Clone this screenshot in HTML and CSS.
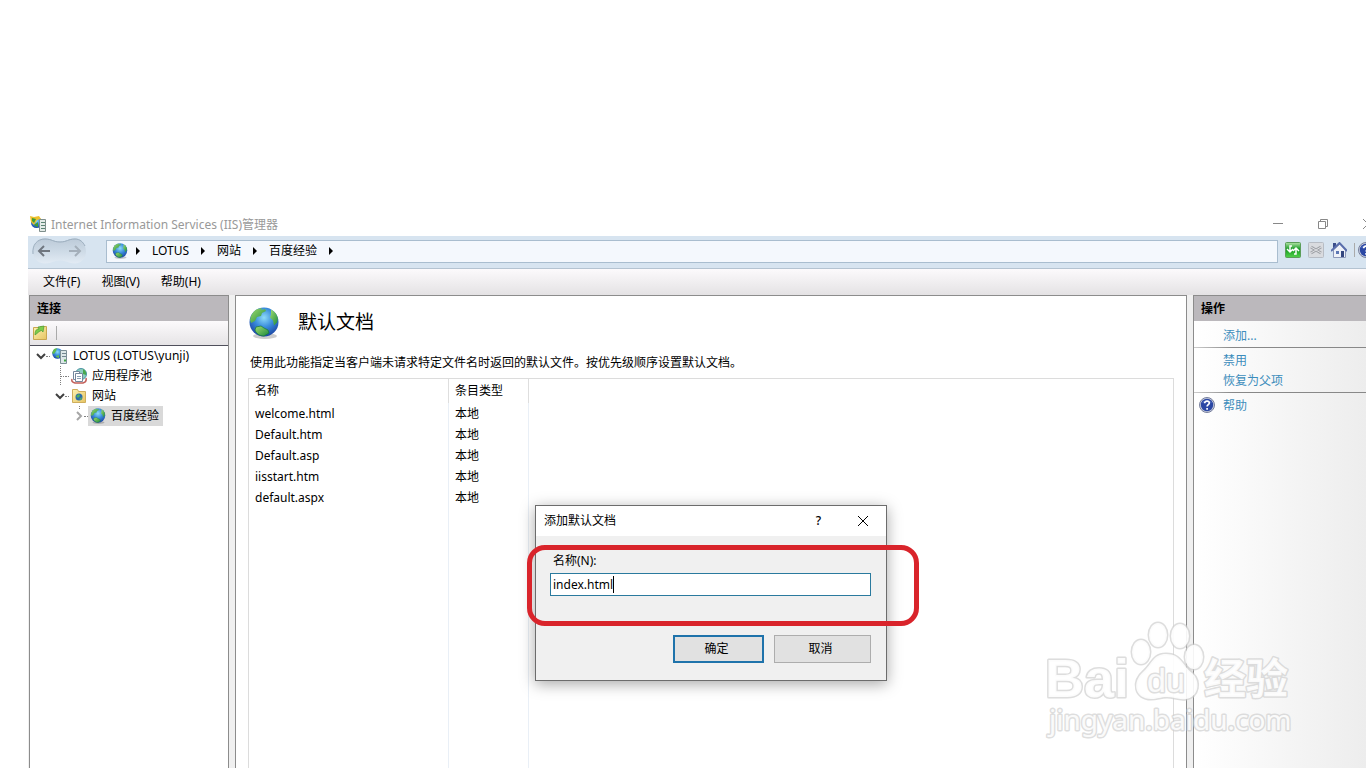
FILE: index.html
```html
<!DOCTYPE html>
<html lang="zh-CN">
<head>
    <meta charset="UTF-8">
    <meta name="viewport" content="width=device-width, initial-scale=1.0">
    <title>Internet Information Services (IIS)管理器</title>
    <link rel="stylesheet" href="styles.css">
</head>
<body>
    <!-- shared icons -->
    <svg class="defs" aria-hidden="true">
        <defs>
            <radialGradient id="sea" cx="50%" cy="35%" r="65%">
                <stop offset="0" stop-color="#8edcf8"/>
                <stop offset="0.5" stop-color="#3a8cdc"/>
                <stop offset="1" stop-color="#1b45a4"/>
            </radialGradient>
            <linearGradient id="land" x1="0" y1="0" x2="1" y2="1">
                <stop offset="0" stop-color="#a0dc70"/>
                <stop offset="1" stop-color="#1c8a3c"/>
            </linearGradient>
            <linearGradient id="green" x1="0" y1="0" x2="0" y2="1">
                <stop offset="0" stop-color="#b4e4a8"/>
                <stop offset="0.45" stop-color="#149a22"/>
                <stop offset="1" stop-color="#52d24a"/>
            </linearGradient>
            <linearGradient id="paper" x1="0" y1="0" x2="1" y2="1">
                <stop offset="0" stop-color="#fdf3b2"/>
                <stop offset="1" stop-color="#e6c463"/>
            </linearGradient>
            <linearGradient id="groove" x1="0" y1="0" x2="0" y2="1">
                <stop offset="0" stop-color="#bccad8"/>
                <stop offset="0.5" stop-color="#cddae6"/>
                <stop offset="1" stop-color="#e2ebf4"/>
            </linearGradient>
        </defs>
        <symbol id="globe" viewBox="0 0 32 32">
            <ellipse cx="17" cy="29" rx="12" ry="3" fill="#000" opacity="0.2"/>
            <circle cx="16" cy="15" r="14.500" fill="url(#sea)"/>
            <path d="M3 9C5 4 9 1.500 14 1l-1 2 4-1 1 2-4 2-1 3-4 1-2 4-4 2-1-3z" fill="url(#land)"/>
            <path d="M23 2.500c4 2 6 5 7 9l-1 4-3 3-1-5-3-3 1-3z" fill="url(#land)"/>
            <path d="M8 20l5-1 3 2 4 2 1 3-5 3c-5 0-8-3-9-6z" fill="url(#land)" stroke="#177a3a" stroke-width=".7"/>
        </symbol>
        <symbol id="server" viewBox="0 0 16 16">
            <circle cx="5.500" cy="5.500" r="5.200" fill="url(#sea)"/>
            <path d="M0 5l2-4 3-1-1 3-2 3zM4 8l3-1v3l-3-1z" fill="#62bd4c"/>
            <path d="M8.500 2.500h6v13h-6z" fill="#dce7e8" stroke="#7b8f96"/>
            <path d="M10 5.500h4M10 8.500h4" stroke="#71868f"/>
            <path d="M12 12.500h2" stroke="#3da53f" stroke-width="2"/>
        </symbol>
        <symbol id="help" viewBox="0 0 16 16">
            <circle cx="8" cy="8" r="7.500" fill="#c9cede" stroke="#777f9c"/>
            <circle cx="8" cy="8" r="6.200" fill="#2a47a4"/>
            <path d="M3 6a5.500 4.500 0 0 1 10 0q-5-2-10 0z" fill="#7e98dc" opacity="0.7"/>
            <path d="M5.700 6.200c0-3 4.800-2.700 4.600-.1-.1 1.500-2.200 1.700-2.200 3.400M8.100 11v1.700" fill="none" stroke="#fff" stroke-width="1.700"/>
        </symbol>
        <symbol id="chevron" viewBox="0 0 10 20">
            <path d="M1 8l4 4 4-4" fill="none" stroke="#404040" stroke-width="2"/>
        </symbol>
        <symbol id="arrow" viewBox="0 0 4 8">
            <path d="M0 0l4 4-4 4z" fill="#000"/>
        </symbol>
    </svg>

    <div class="window">
        <header class="titlebar">
            <svg class="icon" viewBox="0 0 16 16">
                <circle cx="6.500" cy="6.500" r="5.500" fill="url(#sea)"/>
                <path d="M0 0l4 1 5-1 2 3-4 1-3 5-3-3z" fill="#edc02c"/>
                <path d="M2 2l4 1-2 4-2-2zM4 9l4-3v5l-3-1z" fill="#3f9b39"/>
                <path d="M9.500 3.500h6v12h-6z" fill="#e4ebe8" stroke="#7f8f8c"/>
                <path d="M11 6.500h4M11 9.500h4M11 12.500h4" stroke="#5c8474"/>
            </svg>
            <h1 class="window-title">Internet Information Services (IIS)管理器</h1>
            <div class="window-buttons">
                <button aria-label="最小化"><svg viewBox="0 0 10 10"><path d="M0 4.500h10"/></svg></button>
                <button aria-label="还原"><svg viewBox="0 0 10 10"><path d="M.5 2.500h7v7h-7zM2.500 2.500v-2h7v7h-2"/></svg></button>
                <button aria-label="关闭"><svg viewBox="0 0 10 10"><path d="M0 0l10 10M10 0L0 10"/></svg></button>
            </div>
        </header>

        <nav class="navbar">
            <div class="history">
                <svg class="history-shape" viewBox="0 0 55 26">
                    <path d="M13 .5c7 0 8 3 15 3s8-3 15-3c6 0 11 6 11 13s-5 12-11 12c-7 0-8-3-15-3s-8 3-15 3c-7 0-12-5-12-12S6 .5 13 .5z" fill="url(#groove)"/>
                    <path d="M1 16C0 7 5 1 13 1c7 0 8 3 15 3s8-3 15-3c5 0 8 3 10 7" fill="none" stroke="#9caebe"/>
                </svg>
                <button aria-label="后退"><svg viewBox="0 0 14 12"><path d="M13 6H2M7 1L2 6l5 5" fill="none" stroke="#707780" stroke-width="2"/></svg></button>
                <button aria-label="前进"><svg viewBox="0 0 14 12"><path d="M1 6h11M7 1l5 5-5 5" fill="none" stroke="#a4afba" stroke-width="2"/></svg></button>
            </div>
            <div class="address">
                <svg class="icon"><use href="#globe"/></svg>
                <svg class="arrow"><use href="#arrow"/></svg>
                <a href="#">LOTUS</a>
                <svg class="arrow"><use href="#arrow"/></svg>
                <a href="#">网站</a>
                <svg class="arrow"><use href="#arrow"/></svg>
                <a href="#">百度经验</a>
                <svg class="arrow"><use href="#arrow"/></svg>
            </div>
            <div class="tools">
                <button aria-label="刷新">
                    <svg class="icon" viewBox="0 0 16 16">
                        <rect x=".5" y=".5" width="15" height="15" rx="1" fill="url(#green)" stroke="#5b9d59"/>
                        <path d="M7 4H5v5M2 7l3 3 3-3M9 12h2V7M8 9l3-3 3 3" fill="none" stroke="#fff" stroke-width="1.500"/>
                    </svg>
                </button>
                <button aria-label="停止" disabled>
                    <svg class="icon" viewBox="0 0 16 16">
                        <rect x=".5" y=".5" width="15" height="15" rx="1" fill="#d9dbdf" stroke="#b7bcc4"/>
                        <path d="M3 5l10 6M13 5L3 11" stroke="#a0a3a8" stroke-width="3"/>
                        <path d="M3 5l10 6M13 5L3 11" stroke="#dfe0e3"/>
                    </svg>
                </button>
                <button aria-label="主页">
                    <svg class="icon" viewBox="0 0 16 16">
                        <path d="M2.500 8L9 2l5.500 6v7.500h-12z" fill="#eef1f8" stroke="#8c98b8"/>
                        <path d="M2 1h3v5H2z" fill="#3a4d8a"/>
                        <path d="M0 9l8.500-8L16 9" fill="none" stroke="#5a6eac" stroke-width="2"/>
                        <path d="M5 9h3v3H5z" fill="#5c77b4"/>
                        <path d="M10 9h3v6h-3z" fill="#34477f"/>
                    </svg>
                </button>
                <span class="tool-divider"></span>
                <button aria-label="帮助"><svg class="icon"><use href="#help"/></svg></button>
            </div>
        </nav>

        <div class="menubar">
            <button>文件(F)</button>
            <button>视图(V)</button>
            <button>帮助(H)</button>
        </div>

        <div class="workspace">
            <aside class="panel">
                <h2 class="panel-title">连接</h2>
                <div class="panel-tools">
                    <button aria-label="连接">
                        <svg class="icon" viewBox="0 0 16 16">
                            <path d="M1.500 2.500h6l1-1h6v13h-13z" fill="url(#paper)" stroke="#c9a650"/>
                            <path d="M3 10c0-4 1-6 4-6l-1-2 6-1-1 6-1.500-1.500C7 6 6 8 3 10z" fill="#7ccc4a" stroke="#4a9a36" stroke-width=".7"/>
                        </svg>
                    </button>
                    <span class="tool-divider"></span>
                </div>
                <ul class="tree">
                    <li>
                        <div class="node">
                            <svg class="chevron"><use href="#chevron"/></svg><span class="dots"></span>
                            <span class="label"><svg class="icon"><use href="#server"/></svg>LOTUS (LOTUS\yunji)</span>
                        </div>
                        <ul>
                            <li>
                                <div class="node">
                                    <svg class="chevron" viewBox="0 0 10 20"><path d="M5.500 0v20M6 10.500h4" fill="none" stroke="#808080" stroke-dasharray="1 1"/></svg><span class="dots"></span>
                                    <span class="label">
                                        <svg class="icon" viewBox="0 0 16 16">
                                            <circle cx="10" cy="6" r="5.500" fill="#8cccc0" stroke="#4b94a4"/>
                                            <path d="M12 1q4 2 3 6l-3-1z" fill="#4aa84c"/>
                                            <path d="M1 11q-1 3 3 4h8q4-1 3-5" fill="none" stroke="#c3605a" stroke-width="1.500"/>
                                            <path d="M2.500 3.500h6v8h-6z" fill="#fff" stroke="#75879c"/>
                                            <path d="M4.500 5.500h7v8h-7z" fill="#fff" stroke="#75879c"/>
                                            <path d="M6 8.500h4M6 10.500h4" stroke="#8ca0b4"/>
                                        </svg>应用程序池</span>
                                </div>
                            </li>
                            <li>
                                <div class="node">
                                    <svg class="chevron"><use href="#chevron"/></svg><span class="dots"></span>
                                    <span class="label">
                                        <svg class="icon" viewBox="0 0 16 16">
                                            <path d="M1.500 1.500h5l1 2h7v11h-13z" fill="url(#paper)" stroke="#cfae5c"/>
                                            <circle cx="8" cy="9" r="3.500" fill="#2c6cac"/>
                                            <path d="M5 8l3-2 1 2-2 2zM8 11l3-2-1 3z" fill="#55b556"/>
                                        </svg>网站</span>
                                </div>
                                <ul>
                                    <li>
                                        <div class="node">
                                            <svg class="chevron" viewBox="0 0 10 20"><path d="M5.500 0v4" fill="none" stroke="#808080" stroke-dasharray="1 1"/><path d="M3 6l4 4-4 4" fill="none" stroke="#a6a6a6" stroke-width="2"/></svg><span class="dots"></span>
                                            <span class="label selected"><svg class="icon"><use href="#globe"/></svg>百度经验</span>
                                        </div>
                                    </li>
                                </ul>
                            </li>
                        </ul>
                    </li>
                </ul>
            </aside>

            <main class="content">
                <div class="heading">
                    <svg class="heading-icon"><use href="#globe"/></svg>
                    <h2>默认文档</h2>
                </div>
                <p class="description">使用此功能指定当客户端未请求特定文件名时返回的默认文件。按优先级顺序设置默认文档。</p>
                <div class="list">
                    <table>
                        <thead>
                            <tr><th class="col-name">名称</th><th class="col-type">条目类型</th><td></td></tr>
                        </thead>
                        <tbody>
                            <tr><td>welcome.html</td><td>本地</td><td></td></tr>
                            <tr><td>Default.htm</td><td>本地</td><td></td></tr>
                            <tr><td>Default.asp</td><td>本地</td><td></td></tr>
                            <tr><td>iisstart.htm</td><td>本地</td><td></td></tr>
                            <tr><td>default.aspx</td><td>本地</td><td></td></tr>
                        </tbody>
                    </table>
                </div>
            </main>

            <aside class="panel actions">
                <h2 class="panel-title">操作</h2>
                <div class="action-list">
                    <a href="#">添加...</a>
                    <hr>
                    <a href="#">禁用</a>
                    <a href="#">恢复为父项</a>
                    <hr>
                    <div class="action-help">
                        <svg class="icon"><use href="#help"/></svg>
                        <a href="#">帮助</a>
                    </div>
                </div>
            </aside>
        </div>
    </div>

    <form class="dialog" role="dialog" aria-labelledby="dialog-title">
        <div class="dialog-bar">
            <h2 id="dialog-title">添加默认文档</h2>
            <button type="button" class="dialog-help">?</button>
            <button type="button" aria-label="关闭"><svg viewBox="0 0 12 12"><path d="M1 1l10 10M11 1L1 11" stroke="#000"/></svg></button>
        </div>
        <div class="dialog-body">
            <label for="doc-name">名称(N):</label>
            <div class="field">
                <input id="doc-name" type="text" value="index.html">
                <span class="caret"></span>
            </div>
            <div class="dialog-buttons">
                <button type="submit" class="ok">确定</button>
                <button type="button" class="cancel">取消</button>
            </div>
        </div>
    </form>
    <div class="highlight"></div>

    <svg class="watermark" viewBox="0 0 260 130">
        <g class="mark">
            <ellipse cx="96" cy="42" rx="9" ry="12"/>
            <ellipse cx="113" cy="25" rx="9" ry="12"/>
            <ellipse cx="135" cy="26" rx="9" ry="12"/>
            <ellipse cx="149" cy="47" rx="9" ry="12"/>
            <path d="M121 44c-13 0-14 10-22 17-13 11-9 28 7 28 7 0 9-2 16-2s11 3 19 2c13-2 15-18 6-26-10-8-11-19-26-19z"/>
            <text class="bai" x="0" y="87">Bai</text>
            <text class="du" x="102" y="82">du</text>
            <text class="exp" x="159" y="84">经验</text>
            <text class="site" x="4" y="120">jingyan.baidu.com</text>
        </g>
    </svg>
</body>
</html>
```
FILE: styles.css
```css
* {
    box-sizing: border-box;
}
body {
    position: relative;
    margin: 0;
    min-height: 100vh;
    display: flex;
    flex-direction: column;
    overflow: hidden;
    background: #fff;
    color: #000;
    font-family: "Noto Sans", "Noto Sans CJK SC", sans-serif;
    font-size: 12px;
    line-height: 20px;
}
h1, h2, p, ul {
    margin: 0;
    padding: 0;
    font-size: 12px;
    font-weight: normal;
}
ul {
    list-style: none;
}
button {
    margin: 0;
    padding: 0;
    border: none;
    background: none;
    color: inherit;
    font: inherit;
}
a {
    color: inherit;
    text-decoration: none;
}
svg {
    display: block;
    flex: none;
}
.defs {
    position: absolute;
    width: 0;
    height: 0;
}
.icon {
    width: 16px;
    height: 16px;
}

/* the window runs a little past the right edge of the screen */
.window {
    flex: 1;
    display: flex;
    flex-direction: column;
    margin: 212px -20px 0 28px;
    background: #f0f0f0;
}
.titlebar {
    display: flex;
    align-items: center;
    gap: 5px;
    height: 24px;
    padding: 0 13px 0 2px;
    background: #fff;
}
.window-title {
    flex: 1;
    padding-top: 2px;
    color: #999;
}
.window-buttons {
    display: flex;
    gap: 35px;
}
.window-buttons svg {
    width: 10px;
    height: 10px;
    fill: none;
    stroke: #888;
}

.navbar {
    display: flex;
    align-items: center;
    height: 33px;
    padding: 0 12px 2px 4px;
    background: #d7e4f0;
    border-bottom: 1px solid #b4c3d1;
}
.history {
    position: relative;
    display: flex;
    align-items: center;
    justify-content: space-between;
    width: 55px;
    height: 26px;
    margin-right: 19px;
    padding: 0 5px;
}
.history-shape {
    position: absolute;
    inset: 0;
}
.history button {
    position: relative;
}
.history button svg {
    width: 14px;
    height: 12px;
}
.address {
    flex: 1;
    display: flex;
    align-items: center;
    gap: 12px;
    height: 23px;
    padding-left: 5px;
    border: 1px solid #a9bdcf;
    background: #f4f8fd;
}
.address .icon {
    margin-right: -4px;
}
.arrow {
    width: 4px;
    height: 8px;
}
.tools {
    display: flex;
    align-items: center;
    gap: 7px;
    padding: 0 0 3px 7px;
}
.tool-divider {
    width: 1px;
    height: 14px;
    background: #aaa;
}
.tools .tool-divider {
    margin-right: -4px;
}

.menubar {
    display: flex;
    align-items: center;
    gap: 21px;
    height: 26px;
    padding-left: 15px;
    background: linear-gradient(#fcfafc, #e4e2e4);
}

.workspace {
    flex: 1;
    display: grid;
    grid-template-columns: 200px 1fr 193px;
    gap: 6px;
    padding-left: 1px;
}
.panel {
    border: 1px solid #8c8c8c;
    border-bottom: none;
    background: #fff;
}
.panel-title {
    height: 25px;
    padding-left: 7px;
    background: #bbb8bc;
    font-weight: bold;
    line-height: 25px;
}
.panel-tools {
    display: flex;
    align-items: center;
    gap: 8px;
    height: 25px;
    padding-left: 2px;
    background: linear-gradient(#fcfafc, #e6e4e6);
    border-bottom: 1px solid #50505c;
}
.tree ul {
    padding-left: 19px;
}
.node {
    display: flex;
    align-items: center;
    height: 20px;
    padding-left: 6px;
}
.chevron {
    width: 10px;
    height: 20px;
}
.dots {
    width: 4px;
    height: 1px;
    border-top: 1px dotted #808080;
}
.label {
    display: flex;
    align-items: center;
    gap: 5px;
    padding: 0 4px 0 2px;
    white-space: nowrap;
}
.selected {
    background: #d9d9d9;
}

.content {
    display: flex;
    flex-direction: column;
    padding: 11px 12px 0;
    border: 1px solid #8c8c8c;
    border-bottom: none;
    background: #fff;
}
.heading {
    display: flex;
    align-items: center;
    gap: 18px;
    height: 32px;
}
.heading-icon {
    width: 32px;
    height: 32px;
}
.heading h2 {
    padding-bottom: 2px;
    font-size: 19px;
}
.description {
    margin: 14px 0 5px;
    padding-left: 2px;
}
.list {
    flex: 1;
    border: 1px solid #dcdcdc;
    border-bottom: none;
    background: linear-gradient(#e9eff6, #e9eff6) 199px 0 / 1px 100% no-repeat,
        linear-gradient(#e9eff6, #e9eff6) 279px 0 / 1px 100% no-repeat;
}
table {
    width: 100%;
    table-layout: fixed;
    border-collapse: separate;
    border-spacing: 0;
}
th, td {
    height: 21px;
    padding: 0 6px;
    text-align: left;
    font-weight: normal;
}
th {
    height: 24px;
    border-right: 1px solid #dedede;
}
.col-name {
    width: 200px;
}
.col-type {
    width: 80px;
}

.actions {
    background: linear-gradient(90deg, #fff, #ebebeb);
}
.action-list {
    padding-top: 4px;
    color: #3c8dbc;
}
.action-list a {
    display: block;
    padding: 1px 0 0 29px;
    line-height: 19px;
}
.action-list hr {
    height: 1px;
    margin: 2px 0;
    border: none;
    background: linear-gradient(90deg, #ccc, #888 20%);
}
.action-help {
    display: flex;
    align-items: center;
    gap: 8px;
    padding-left: 5px;
}
.action-help a {
    padding-left: 0;
}

.dialog {
    position: absolute;
    left: 535px;
    top: 505px;
    width: 352px;
    border: 1px solid #6c6c6c;
    background: #f0f0f0;
    box-shadow: 0 3px 14px rgba(0, 0, 0, 0.35);
}
.dialog-bar {
    display: flex;
    align-items: center;
    height: 30px;
    padding: 0 17px 0 8px;
    background: #fff;
}
.dialog-bar h2 {
    flex: 1;
}
.dialog-bar svg {
    width: 12px;
    height: 12px;
}
.dialog-help {
    margin-right: 36px;
    font-weight: 500;
}
.dialog-body {
    padding: 15px 15px 17px 14px;
}
.dialog-body label {
    display: block;
    padding: 0 3px 2px;
}
.field {
    position: relative;
}
.field input {
    display: block;
    width: 100%;
    height: 23px;
    padding: 0 2px;
    border: 1px solid #2a7a9e;
    border-radius: 0;
    outline: none;
    background: #fff;
    font: inherit;
}
.caret {
    position: absolute;
    left: 63px;
    top: 3px;
    width: 1px;
    height: 17px;
    background: #000;
}
.dialog-buttons {
    display: flex;
    justify-content: flex-end;
    gap: 10px;
    margin-top: 39px;
}
.dialog-buttons button {
    height: 28px;
    border: 1px solid #adadad;
    background: #e1e1e1;
}
.dialog-buttons .ok {
    width: 91px;
    padding-right: 4px;
    border: 2px solid #1f73ab;
}
.dialog-buttons .cancel {
    width: 97px;
    padding-right: 4px;
}
.highlight {
    position: absolute;
    left: 527px;
    top: 545px;
    width: 392px;
    height: 81px;
    border: 5px solid #d9242b;
    border-radius: 18px;
    pointer-events: none;
}

.watermark {
    position: absolute;
    left: 1045px;
    top: 610px;
    width: 260px;
    height: 130px;
    overflow: visible;
    pointer-events: none;
}
.mark {
    fill: #fff;
    fill-opacity: 0.9;
    stroke: #cfcfcf;
    stroke-width: 3px;
    stroke-linejoin: round;
    stroke-opacity: 0.7;
    paint-order: stroke;
}
.bai {
    font: bold 54px "Liberation Sans", sans-serif;
}
.du {
    font: 34px "Liberation Sans", sans-serif;
}
.exp {
    font: bold 42px "Noto Sans CJK SC", sans-serif;
}
.site {
    font: 28px "Noto Sans", sans-serif;
}
```
